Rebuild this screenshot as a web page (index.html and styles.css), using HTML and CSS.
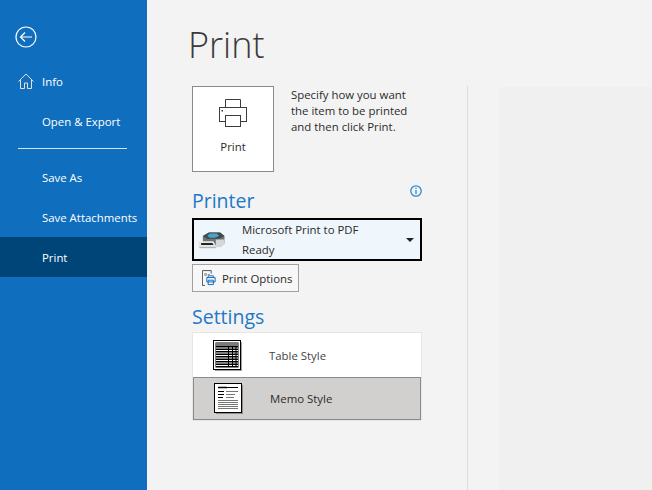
FILE: index.html
```html
<!DOCTYPE html>
<html lang="en">
  <head>
    <meta charset="UTF-8" />
    <meta name="viewport" content="width=device-width, initial-scale=1.0" />
    <link rel="stylesheet" href="styles.css">
    <title>Print</title>
  </head>
  <body>
    <nav class="sidebar">
      <button class="back" aria-label="Back">
        <svg width="22" height="22" viewBox="0 0 22 22" fill="none" stroke="#fff" stroke-width="1.2">
          <circle cx="11" cy="11" r="10"/>
          <path d="M17 11H5.500M10 6.500 5.500 11l4.500 4.500"/>
        </svg>
      </button>
      <a class="nav-item">
        <svg class="nav-icon" width="16" height="16" viewBox="0 0 16 16" fill="none" stroke="#e6e0da" stroke-width="1">
          <path d="M.5 8.500 8 1l7.500 7.500M2.500 7v8.500h4V10h3v5.500h4V7"/>
        </svg>
        Info
      </a>
      <a class="nav-item">Open &amp; Export</a>
      <hr class="nav-rule" />
      <a class="nav-item">Save As</a>
      <a class="nav-item">Save Attachments</a>
      <a class="nav-item active">Print</a>
    </nav>

    <main class="content">
      <h1 class="title">Print</h1>
      <div class="columns">
        <section class="options">
          <!-- print button + hint -->
          <div class="print-row">
            <button class="print-btn">
              <svg width="28" height="28" viewBox="0 0 28 28" fill="#fff" stroke="#3c3c3c" stroke-width="1">
                <path d="M6.500 8.500V.5h15v8"/>
                <rect x="0.500" y="8.500" width="27" height="14" fill="none"/>
                <rect x="6.500" y="16.500" width="15" height="11"/>
                <rect x="2.500" y="11" width="1.500" height="1.500" fill="#3c3c3c" stroke="none"/>
              </svg>
              <span>Print</span>
            </button>
            <p class="hint">Specify how you want the item to be printed and then click Print.</p>
          </div>

          <div class="group-head">
            <h2 class="group-title">Printer</h2>
            <svg class="info" width="12" height="12" viewBox="0 0 12 12" fill="none" stroke="#2b88d8">
              <circle cx="6" cy="6" r="5.200" stroke-width="1.300"/>
              <path d="M6 2.800v1.200M6 5v4" stroke-width="1.300"/>
            </svg>
          </div>

          <div class="printer-select">
            <svg width="29" height="19" viewBox="0 0 32 22">
              <path d="M6 7 13 3h13l5 4v8l-4 4H8L6 15z" fill="#6f7478"/>
              <path d="M6 7 13 3h13l5 4-6 3H11z" fill="#3d4a4e"/>
              <path d="M14 4h8l3 3-5 2h-6l-3-2z" fill="#4aa3c9"/>
              <path d="M1 13h17l3 5v3H2l-1-3z" fill="#e8e8e8"/>
              <path d="M4 15h13l1.500 2.500H4z" fill="#222"/>
              <path d="M2 19.500h19V21H2z" fill="#b4b4b4"/>
              <path d="M21 11h10v6l-6 3h-4z" fill="#d4d6d8"/>
            </svg>
            <div class="printer-text">
              <span>Microsoft Print to PDF</span>
              <span>Ready</span>
            </div>
            <span class="caret"></span>
          </div>

          <button class="options-btn">
            <svg width="14" height="16" viewBox="0 0 16 18" fill="none" stroke="#444">
              <path d="M10.500 4V.5h-10v17h3"/>
              <path d="M3 4h2v2H3zM6.500 5H9" stroke="#888"/>
              <path d="M7 8.500V6.500h6v2M5.500 8.500h9.500v5h-9.500zM7 11.500h6v5H7z" stroke="#0f6cbd" stroke-width="1.100"/>
            </svg>
            Print Options
          </button>

          <h2 class="group-title settings-title">Settings</h2>
          <ul class="style-list">
            <li class="style-item">
              <svg class="style-icon" width="29" height="31" viewBox="0 0 29 31">
                <rect x="2" y="2" width="27" height="29" fill="#a0a0a0"/>
                <rect x=".5" y=".5" width="27" height="29" fill="#fff" stroke="#000"/>
                <rect x="2.500" y="2.500" width="23" height="25" fill="#000"/>
                <rect x="3" y="3" width="22" height="3" fill="#7a7a7a"/>
                <path d="M3 8h22M3 10.500h22M3 13h22M3 15.500h22M3 18h22M3 20.500h22M3 23h22M3 25.500h22" stroke="#fff"/>
                <path d="M15.500 6v21M19.500 6v21M23 6v21" stroke="#000"/>
              </svg>
              Table Style
            </li>
            <li class="style-item selected">
              <svg class="style-icon" width="29" height="31" viewBox="0 0 29 31">
                <rect x="2" y="2" width="27" height="29" fill="#8e8c88"/>
                <rect x=".5" y=".5" width="27" height="29" fill="#fff" stroke="#000"/>
                <path d="M4 4.500h9" stroke="#000" stroke-width="1.500"/>
                <path d="M13 4.500h11" stroke="#000"/>
                <path d="M4 8.500h6M4 11.500h6M4 14.500h5" stroke="#000" stroke-width="1.200"/>
                <path d="M12 8.500h12M12 11.500h9M12 14.500h8M4 17.500h20M4 19.500h20M4 21.500h20M4 23.500h20M4 25.500h20" stroke="#777"/>
              </svg>
              Memo Style
            </li>
          </ul>
        </section>
        <div class="rule"></div>
        <section class="preview"></section>
      </div>
    </main>
  </body>
</html>
```

FILE: styles.css
```css
* {
  box-sizing: border-box;
}

html,
body {
  height: 100%;
}

body {
  margin: 0;
  display: flex;
  overflow: hidden;
  background-color: #f3f3f3;
  color: #2b2b2b;
  font-family: "Open Sans", "Noto Sans", sans-serif;
  font-size: 11.4px;
}

button {
  font: inherit;
  color: inherit;
  cursor: pointer;
}

/* sidebar */
.sidebar {
  width: 147px;
  flex-shrink: 0;
  padding-top: 26px;
  background-color: #106ebe;
  color: #fff;
}

.back {
  display: block;
  margin: 0 0 13px 15px;
  padding: 0;
  height: 22px;
  border: 0;
  background: none;
}

.nav-item {
  position: relative;
  display: flex;
  align-items: center;
  height: 40px;
  padding-left: 42px;
}

.nav-item.active {
  background-color: #004578;
}

.nav-icon {
  position: absolute;
  left: 18px;
  top: 12px;
}

.nav-rule {
  width: 109px;
  height: 1px;
  margin: 7px 0 8px 18px;
  border: 0;
  background-color: #d5e6f5;
}

/* main area */
.content {
  flex: 1;
  display: flex;
  flex-direction: column;
  padding-left: 41px;
}

.title {
  margin: 18px 0 0;
  height: 42px;
  font-size: 36px;
  font-weight: 300;
  line-height: 54px;
  color: #3a3a3a;
}

.columns {
  flex: 1;
  display: flex;
  margin-top: 26px;
}

.options {
  width: 234px;
  margin-left: 4px;
}

.print-row {
  display: flex;
  gap: 17px;
}

.print-btn {
  display: flex;
  flex-direction: column;
  align-items: center;
  flex-shrink: 0;
  width: 82px;
  height: 86px;
  padding: 12px 0 0;
  border: 1px solid #8a8a8a;
  background-color: #fff;
}

.print-btn span {
  margin-top: 12px;
}

.hint {
  margin: 1px 0 0;
  width: 150px;
  line-height: 16px;
}

.group-head {
  display: flex;
  justify-content: space-between;
  align-items: flex-start;
  padding-right: 4px;
  margin-top: 12px;
}

.group-title {
  margin: 0;
  font-size: 19.5px;
  font-weight: 400;
  line-height: 34px;
  height: 34px;
  color: #1f78c8;
}

.info {
  margin-top: 1px;
}

.printer-select {
  display: flex;
  align-items: center;
  width: 230px;
  height: 43px;
  padding: 0 6px 0 3px;
  border: 2px solid #000;
  background-color: #eff6fc;
}

.printer-text {
  flex: 1;
  display: flex;
  flex-direction: column;
  gap: 4px;
  margin-left: 16px;
  line-height: 16px;
}

.caret {
  width: 0;
  height: 0;
  border-left: 4px solid transparent;
  border-right: 4px solid transparent;
  border-top: 4px solid #222;
}

.options-btn {
  display: flex;
  align-items: center;
  gap: 6px;
  height: 28px;
  margin-top: 3px;
  padding: 0 6px 0 9px;
  border: 1px solid #a0a0a0;
  background-color: #f7f7f7;
}

.settings-title {
  margin-top: 8px;
  height: 32px;
}

.style-list {
  width: 230px;
  margin: 0;
  padding: 0;
  list-style: none;
  border: 1px solid #e6e6e6;
  background-color: #fff;
}

.style-item {
  display: flex;
  align-items: center;
  height: 44px;
  padding-left: 20px;
  color: #444;
}

.style-item.selected {
  height: 43px;
  padding-left: 20px;
  border: 1px solid #8a8a8a;
  background-color: #d2d0ce;
  color: #2b2b2b;
}

.style-icon {
  margin-right: 27px;
}

.rule {
  width: 1px;
  margin-left: 41px;
  background-color: #dcdcdc;
}

.preview {
  flex: 1;
  margin: 1px 0 0 31px;
  background-color: #f0f0f0;
}
```
